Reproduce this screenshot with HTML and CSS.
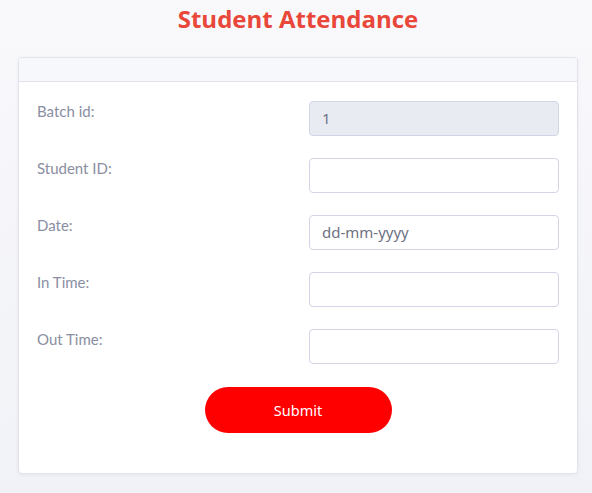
FILE: index.html
```html
<!DOCTYPE html>
<html>
<head>
<meta charset="utf-8">
<link rel="stylesheet" href="styles.css">
</head>
<body>
<div class="page">
  <h1 class="title">Student Attendance</h1>
  <div class="card">
    <div class="card-header"></div>
    <form class="card-body">
      <div class="row">
        <label class="label">Batch id:</label>
        <div class="input disabled">1</div>
      </div>
      <div class="row">
        <label class="label">Student ID:</label>
        <div class="input"></div>
      </div>
      <div class="row">
        <label class="label">Date:</label>
        <div class="input">dd-mm-yyyy</div>
      </div>
      <div class="row">
        <label class="label">In Time:</label>
        <div class="input"></div>
      </div>
      <div class="row">
        <label class="label">Out Time:</label>
        <div class="input"></div>
      </div>
      <div class="actions">
        <button type="button" class="btn">Submit</button>
      </div>
    </form>
  </div>
</div>
</body>
</html>
```

FILE: styles.css
```css
html, body {
  margin: 0;
  padding: 0;
}
body {
  background: linear-gradient(180deg, #f9f9fc 0%, #f1f2f7 100%);
  height: 493px;
  overflow: hidden;
  font-family: "Lato", "Noto Sans", sans-serif;
}
.page {
  width: 560px;
  margin-left: 18px;
}
.title {
  margin: 0;
  padding-top: 3px;
  height: 54px;
  line-height: 32px;
  text-align: center;
  font-family: "Open Sans", "Noto Sans", sans-serif;
  font-weight: 700;
  font-size: 24px;
  color: #e8473a;
  letter-spacing: 0;
}
.card {
  background: #fff;
  border: 1px solid #e2e3ea;
  border-radius: 4px;
  box-shadow: 0 1px 4px rgba(40, 50, 90, 0.06);
  height: 417px;
  box-sizing: border-box;
  overflow: hidden;
}
.card-header {
  height: 23px;
  background: #f7f8fc;
  border-bottom: 1px solid #e2e3ea;
}
.card-body {
  padding: 19px 18px 0 18px;
  display: flex;
  flex-direction: column;
  gap: 22px;
  margin: 0;
}
.row {
  display: flex;
  justify-content: space-between;
  align-items: flex-start;
  height: 35px;
}
.label {
  font-size: 15px;
  color: #8a8ea2;
  padding-top: 1px;
  line-height: 19px;
}
.input {
  width: 250px;
  height: 35px;
  box-sizing: border-box;
  border: 1px solid #d3d4e6;
  border-radius: 4px;
  background: #fff;
  padding: 0 12px;
  line-height: 33px;
  font-family: "Noto Sans", sans-serif;
  font-size: 15px;
  color: #6e7283;
}
.input.disabled {
  background: #e9ebf3;
}
.actions {
  display: flex;
  justify-content: center;
  padding-top: 1px;
}
.btn {
  width: 187px;
  height: 46px;
  border: none;
  border-radius: 23px;
  background: #ff0000;
  color: #fff;
  font-family: "Noto Sans", sans-serif;
  font-size: 14.5px;
  cursor: pointer;
}
```
